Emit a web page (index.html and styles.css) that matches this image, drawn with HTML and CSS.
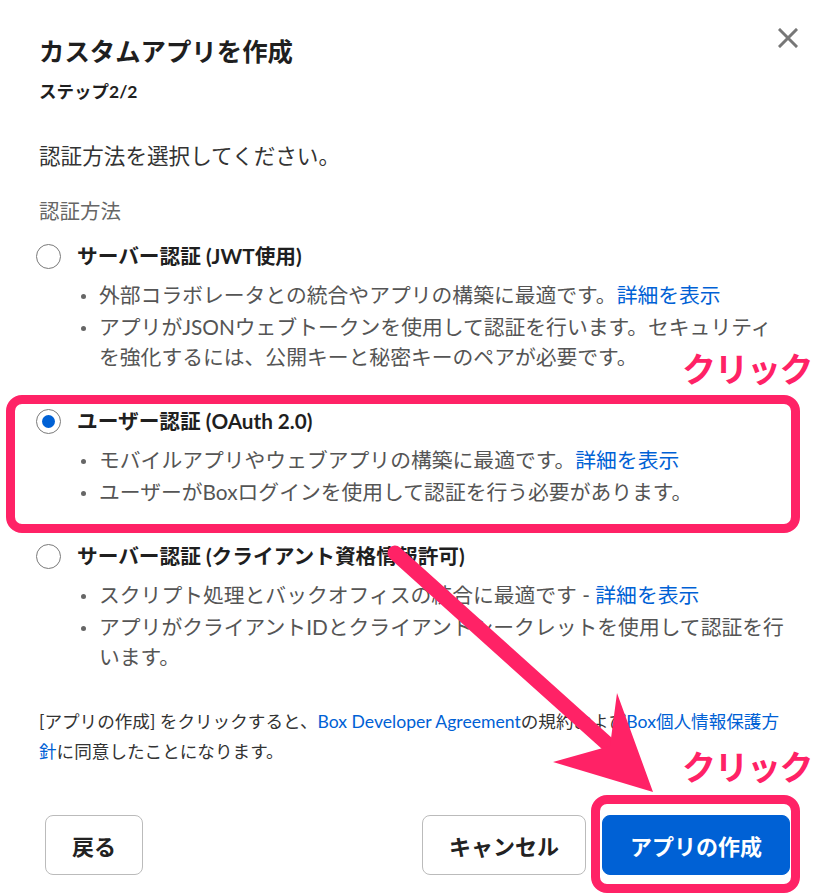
FILE: index.html
```html
<!DOCTYPE html>
<html lang="ja">
<head>
<meta charset="utf-8">
<title>カスタムアプリを作成</title>
<link rel="stylesheet" href="styles.css">
</head>
<body>
<div class="modal">
  <header class="modal-header">
    <h1 class="title">カスタムアプリを作成</h1>
    <button class="close" aria-label="閉じる">
      <svg viewBox="0 0 20 20" width="20" height="20"><path d="M2 2 L18 18 M18 2 L2 18" stroke="#777" stroke-width="3" stroke-linecap="square" fill="none"/></svg>
    </button>
  </header>
  <div class="step">ステップ2/2</div>
  <p class="prompt">認証方法を選択してください。</p>
  <div class="section-label">認証方法</div>

  <div class="options">
    <div class="option">
      <div class="option-head"><span class="radio"></span><span class="option-label">サーバー認証 (JWT使用)</span></div>
      <ul class="bullets">
        <li><span>外部コラボレータとの統合やアプリの構築に最適です。<a class="link">詳細を表示</a></span></li>
        <li><span>アプリがJSONウェブトークンを使用して認証を行います。セキュリティを強化するには、公開キーと秘密キーのペアが必要です。</span></li>
      </ul>
    </div>
    <div class="option">
      <div class="option-head"><span class="radio checked"></span><span class="option-label">ユーザー認証 (OAuth 2.0)</span></div>
      <ul class="bullets">
        <li><span>モバイルアプリやウェブアプリの構築に最適です。<a class="link">詳細を表示</a></span></li>
        <li><span>ユーザーがBoxログインを使用して認証を行う必要があります。</span></li>
      </ul>
    </div>
    <div class="option">
      <div class="option-head"><span class="radio"></span><span class="option-label">サーバー認証 (クライアント資格情報許可)</span></div>
      <ul class="bullets">
        <li><span>スクリプト処理とバックオフィスの統合に最適です - <a class="link">詳細を表示</a></span></li>
        <li><span>アプリがクライアントIDとクライアントシークレットを使用して認証を行います。</span></li>
      </ul>
    </div>
  </div>

  <p class="terms">[アプリの作成] をクリックすると、<a class="link">Box Developer Agreement</a>の規約および<a class="link">Box個人情報保護方針</a>に同意したことになります。</p>

  <div class="actions">
    <button class="btn back">戻る</button>
    <div class="right-group">
      <button class="btn cancel">キャンセル</button>
      <button class="btn create">アプリの作成</button>
    </div>
  </div>
</div>

<div class="annot hl hl-option"></div>
<div class="annot hl hl-button"></div>
<div class="annot click-label click-1">クリック</div>
<div class="annot click-label click-2">クリック</div>
<svg class="annot arrow" viewBox="0 0 839 895" width="839" height="895">
  <line x1="395" y1="553" x2="612" y2="748" stroke="#ff2266" stroke-width="15" stroke-linecap="round"/>
  <polygon points="617,693 653,792 553,762 610,746" fill="#ff2266"/>
</svg>
</body>
</html>
```

FILE: styles.css
```css
html, body {
  margin: 0;
  padding: 0;
  background: #fff;
}

body {
  width: 839px;
  height: 895px;
  position: relative;
  overflow: hidden;
  font-family: Lato, "Noto Sans CJK JP", sans-serif;
  color: #222;
}

.modal {
  padding: 36px 51px 0 39px;
}

.modal-header {
  display: flex;
  justify-content: space-between;
  align-items: flex-start;
}

.title {
  margin: 0;
  font-size: 25.4px;
  line-height: 30px;
  font-weight: 700;
  color: #1f1f1f;
}

.close {
  width: 20px;
  height: 20px;
  padding: 0;
  margin: -8px -10px 0 0;
  border: 0;
  background: none;
  display: block;
}

.close svg {
  display: block;
}

.step {
  margin-top: 14px;
  font-size: 17.5px;
  line-height: 24px;
  font-weight: 700;
  color: #1f1f1f;
}

.prompt {
  margin: 37px 0 0;
  font-size: 21.6px;
  line-height: 30px;
  color: #333;
}

.section-label {
  margin-top: 25px;
  font-size: 20.5px;
  line-height: 30px;
  color: #666;
}

.options {
  margin-top: 15px;
  display: flex;
  flex-direction: column;
  gap: 34px;
}

.option-head {
  display: flex;
  align-items: center;
  gap: 16px;
  margin-left: -3px;
}

.radio {
  width: 25px;
  height: 25px;
  box-sizing: border-box;
  border: 1.5px solid #7a7a7a;
  border-radius: 50%;
  background: #fff;
  flex-shrink: 0;
  display: flex;
  align-items: center;
  justify-content: center;
}

.radio.checked::after {
  content: "";
  width: 13px;
  height: 13px;
  border-radius: 50%;
  background: #0061d5;
}

.option-label {
  font-size: 20.7px;
  line-height: 30px;
  font-weight: 700;
  color: #1f1f1f;
}

.bullets {
  list-style: none;
  margin: 9px 0 0;
  padding: 0 0 0 42px;
}

.bullets li {
  display: flex;
  font-size: 20.8px;
  line-height: 30px;
  color: #555;
}

.bullets li + li {
  margin-top: 2px;
}

.bullets li::before {
  content: "";
  width: 5px;
  height: 5px;
  border-radius: 50%;
  background: #666;
  flex-shrink: 0;
  margin: 14px 13px 0 0;
}

.link {
  color: #0061d5;
  text-decoration: none;
}

.terms {
  margin: 35px 0 0;
  font-size: 17.6px;
  line-height: 30px;
  color: #333;
}

.actions {
  margin: 48px -2px 0 0;
  display: flex;
  justify-content: space-between;
}

.right-group {
  display: flex;
  gap: 16px;
}

.btn {
  height: 60px;
  box-sizing: border-box;
  border: 1px solid #bbb;
  border-radius: 8px;
  background: #fff;
  color: #222;
  font-family: Lato, "Noto Sans CJK JP", sans-serif;
  font-size: 22px;
  font-weight: 700;
  padding: 0;
}

.back {
  width: 98px;
  margin-left: 6px;
}

.cancel {
  width: 164px;
}

.create {
  width: 188px;
  background: #0061d5;
  border-color: #0061d5;
  color: #fff;
}

/* annotation overlay */
.annot {
  position: absolute;
  pointer-events: none;
}

.hl {
  box-sizing: border-box;
  border: 9px solid #ff2266;
  border-radius: 16px;
}

.hl-option {
  left: 6px;
  top: 395px;
  width: 794px;
  height: 138px;
}

.hl-button {
  left: 591px;
  top: 795px;
  width: 209px;
  height: 98px;
}

.click-label {
  font-family: "Noto Sans CJK JP", sans-serif;
  font-weight: 700;
  font-size: 34px;
  line-height: 34px;
  color: #ff2266;
  letter-spacing: -1.5px;
}

.click-1 {
  left: 682px;
  top: 351px;
}

.click-2 {
  left: 682px;
  top: 749px;
}

.arrow {
  left: 0;
  top: 0;
}
```
